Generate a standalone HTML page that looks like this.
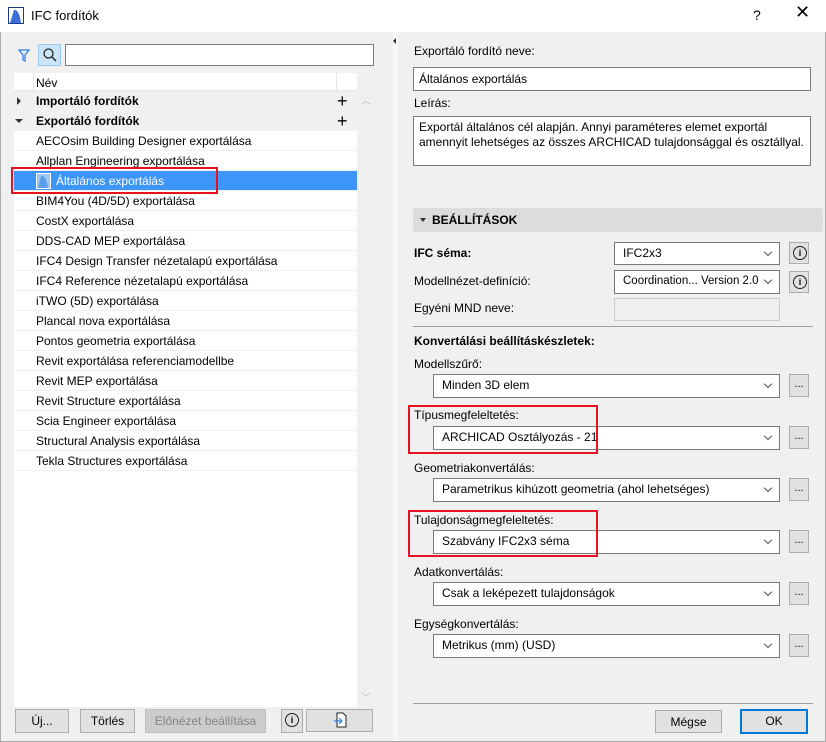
<!DOCTYPE html>
<html><head><meta charset="utf-8"><style>
*{box-sizing:border-box}
body{margin:0;width:826px;height:742px;overflow:hidden;background:#f0f0f0;font-family:"Liberation Sans",sans-serif;font-size:12px;color:#000;position:relative}
.a{position:absolute}
.t{position:absolute;white-space:nowrap;line-height:14px}
.b{font-weight:bold}
.box{position:absolute;background:#fff;border:1px solid #7a7a7a}
.combo{position:absolute;background:#fff;border:1px solid #7a7a7a;padding-left:8px;line-height:21px;white-space:nowrap}
.combo:after{content:"";position:absolute;right:8px;top:6px;width:5px;height:5px;border-right:1px solid #555;border-bottom:1px solid #555;transform:rotate(45deg)}
.dots{position:absolute;width:20px;height:23px;border:1px solid #adadad;background:#e1e1e1;text-align:center;line-height:18px;font-size:11px}
.btn{position:absolute;border:1px solid #adadad;background:#e1e1e1;text-align:center;line-height:22px}
.info{position:absolute;width:20px;height:22px;border:1px solid #adadad;background:#e1e1e1}
.info:after{content:"i";position:absolute;left:3px;top:3px;width:12px;height:12px;border:1px solid #222;border-radius:50%;font-size:9px;line-height:12px;text-align:center;font-weight:bold}
.row{position:absolute;left:14px;width:343px;height:20px;border-bottom:1px solid #f0f0f0;line-height:21px;padding-left:22px;white-space:nowrap}
.red{position:absolute;border:2px solid #e81123}
</style></head><body>
<div class="a" style="left:0;top:0;width:826px;height:32px;background:#fff"></div>
<svg class="a" style="left:8px;top:7px" width="16" height="17"><rect x="0.5" y="0.5" width="15" height="16" fill="#fff" stroke="#1a3a8a"/><path d="M2 16 L6 3 Q11 2 13 16 Z" fill="#3a6fd8"/></svg>
<div class="t" style="left:31px;top:9px;font-size:13px">IFC fordítók</div>
<div class="t" style="left:753px;top:8px;font-size:14px">?</div>
<div class="t" style="left:795px;top:5px;font-size:18px">✕</div>
<div class="a" style="left:0;top:32px;width:1px;height:710px;background:#aaa"></div>
<div class="a" style="left:825px;top:32px;width:1px;height:710px;background:#aaa"></div>

<svg class="a" style="left:18px;top:49px" width="12" height="13"><path d="M1 1 H11 L7 6 V12 L5 11 V6 Z" fill="none" stroke="#2a7de1" stroke-width="1.2"/></svg>
<div class="a" style="left:38px;top:44px;width:23px;height:22px;background:#cce4f7;border:1px solid #99c9ef"></div>
<svg class="a" style="left:42px;top:47px" width="16" height="16"><circle cx="6.5" cy="6.5" r="4.5" fill="none" stroke="#222" stroke-width="1.3"/><path d="M10 10 L14 14" stroke="#222" stroke-width="1.5"/></svg>
<div class="box" style="left:65px;top:44px;width:309px;height:22px"></div>
<div class="a" style="left:14px;top:73px;width:343px;height:634px;background:#fff"></div>
<div class="a" style="left:14px;top:73px;width:343px;height:18px;background:#fff;border-bottom:1px solid #e5e5e5"></div>
<div class="a" style="left:33px;top:73px;width:1px;height:18px;background:#e5e5e5"></div>
<div class="a" style="left:336px;top:73px;width:1px;height:18px;background:#e5e5e5"></div>
<div class="t" style="left:36px;top:76px">Név</div>
<div class="row b" style="top:91px;background:#f0f0f0">Importáló fordítók</div>
<div class="row b" style="top:111px;background:#f0f0f0">Exportáló fordítók</div>
<div class="a" style="left:17px;top:97px;width:0;height:0;border-left:4px solid #333;border-top:4px solid transparent;border-bottom:4px solid transparent"></div>
<div class="a" style="left:15px;top:119px;width:0;height:0;border-top:4px solid #333;border-left:4px solid transparent;border-right:4px solid transparent"></div>
<div class="t" style="left:337px;top:92px;font-size:18px;line-height:18px">+</div>
<div class="t" style="left:337px;top:112px;font-size:18px;line-height:18px">+</div>
<div class="row" style="top:131px">AECOsim Building Designer exportálása</div>
<div class="row" style="top:151px">Allplan Engineering exportálása</div>
<div class="row" style="top:171px;background:#3d95f7;color:#fff;padding-left:42px">Általános exportálás</div>
<svg class="a" style="left:36px;top:173px" width="15" height="16"><rect x="0.5" y="0.5" width="14" height="15" fill="#9cc8f7" stroke="#fff"/><path d="M2 15 L5 3 Q10 2 12 15 Z" fill="#5b9de8"/></svg>
<div class="row" style="top:191px">BIM4You (4D/5D) exportálása</div>
<div class="row" style="top:211px">CostX exportálása</div>
<div class="row" style="top:231px">DDS-CAD MEP exportálása</div>
<div class="row" style="top:251px">IFC4 Design Transfer nézetalapú exportálása</div>
<div class="row" style="top:271px">IFC4 Reference nézetalapú exportálása</div>
<div class="row" style="top:291px">iTWO (5D) exportálása</div>
<div class="row" style="top:311px">Plancal nova exportálása</div>
<div class="row" style="top:331px">Pontos geometria exportálása</div>
<div class="row" style="top:351px">Revit exportálása referenciamodellbe</div>
<div class="row" style="top:371px">Revit MEP exportálása</div>
<div class="row" style="top:391px">Revit Structure exportálása</div>
<div class="row" style="top:411px">Scia Engineer exportálása</div>
<div class="row" style="top:431px">Structural Analysis exportálása</div>
<div class="row" style="top:451px">Tekla Structures exportálása</div>
<div class="red" style="left:11px;top:167px;width:207px;height:27px"></div>
<div class="a" style="left:357px;top:91px;width:16px;height:616px;background:#f0f0f0"></div>
<div class="t" style="left:361px;top:95px;color:#bbb;font-size:10px">︿</div>
<div class="t" style="left:361px;top:692px;color:#bbb;font-size:10px">﹀</div>
<div class="btn" style="left:15px;top:709px;width:54px;height:24px">Új...</div>
<div class="btn" style="left:80px;top:709px;width:55px;height:24px">Törlés</div>
<div class="btn" style="left:145px;top:709px;width:121px;height:24px;background:#ccc;border-color:#bfbfbf;color:#838383">Előnézet beállítása</div>
<div class="info" style="left:281px;top:709px;width:22px;height:24px"></div>
<div class="btn" style="left:306px;top:709px;width:67px;height:23px"></div>
<svg class="a" style="left:334px;top:712px" width="14" height="17"><path d="M3 1 H9 L12 4 V15 H3 Z" fill="#fff" stroke="#222"/><path d="M0 9 H8 M5 6 L8 9 L5 12" fill="none" stroke="#2a7de1" stroke-width="1.2"/></svg>

<div class="a" style="left:393px;top:32px;width:5px;height:710px;background:#f7f7f7"></div>
<div class="a" style="left:393px;top:38px;width:0;height:0;border-right:3px solid #333;border-top:3px solid transparent;border-bottom:3px solid transparent"></div>

<div class="t" style="left:414px;top:44px">Exportáló fordító neve:</div>
<div class="box" style="left:413px;top:67px;width:398px;height:24px;padding-left:5px;line-height:22px">Általános exportálás</div>
<div class="t" style="left:414px;top:96px">Leírás:</div>
<div class="box" style="left:413px;top:116px;width:398px;height:50px;padding:3px 5px;line-height:15px">Exportál általános cél alapján. Annyi paraméteres elemet exportál<br>amennyit lehetséges az összes ARCHICAD tulajdonsággal és osztállyal.</div>
<div class="a" style="left:413px;top:208px;width:410px;height:24px;background:#dcdcdc;border-radius:3px"></div>
<div class="a" style="left:420px;top:218px;width:0;height:0;border-top:4px solid #333;border-left:3px solid transparent;border-right:3px solid transparent"></div>
<div class="t b" style="left:432px;top:213px">BEÁLLÍTÁSOK</div>
<div class="t b" style="left:414px;top:246px">IFC séma:</div>
<div class="combo" style="left:614px;top:242px;width:166px;height:23px">IFC2x3</div>
<div class="info" style="left:789px;top:242px"></div>
<div class="t" style="left:414px;top:274px">Modellnézet-definíció:</div>
<div class="combo" style="left:614px;top:270px;width:166px;height:24px;font-size:11.5px">Coordination... Version 2.0</div>
<div class="info" style="left:789px;top:271px"></div>
<div class="t" style="left:414px;top:301px">Egyéni MND neve:</div>
<div class="a" style="left:614px;top:298px;width:166px;height:23px;border:1px solid #ccc;background:#f0f0f0"></div>
<div class="a" style="left:413px;top:326px;width:400px;height:1px;background:#a0a0a0"></div>
<div class="t b" style="left:414px;top:334px">Konvertálási beállításkészletek:</div>

<div class="t" style="left:414px;top:357px">Modellszűrő:</div>
<div class="combo" style="left:433px;top:374px;width:347px;height:24px">Minden 3D elem</div>
<div class="dots" style="left:789px;top:374px">...</div>
<div class="t" style="left:414px;top:408px">Típusmegfeleltetés:</div>
<div class="combo" style="left:433px;top:426px;width:347px;height:24px">ARCHICAD Osztályozás - 21</div>
<div class="dots" style="left:789px;top:426px">...</div>
<div class="t" style="left:414px;top:461px">Geometriakonvertálás:</div>
<div class="combo" style="left:433px;top:478px;width:347px;height:24px">Parametrikus kihúzott geometria (ahol lehetséges)</div>
<div class="dots" style="left:789px;top:478px">...</div>
<div class="t" style="left:414px;top:513px">Tulajdonságmegfeleltetés:</div>
<div class="combo" style="left:433px;top:530px;width:347px;height:24px">Szabvány IFC2x3 séma</div>
<div class="dots" style="left:789px;top:530px">...</div>
<div class="t" style="left:414px;top:565px">Adatkonvertálás:</div>
<div class="combo" style="left:433px;top:582px;width:347px;height:24px">Csak a leképezett tulajdonságok</div>
<div class="dots" style="left:789px;top:582px">...</div>
<div class="t" style="left:414px;top:617px">Egységkonvertálás:</div>
<div class="combo" style="left:433px;top:634px;width:347px;height:24px">Metrikus (mm) (USD)</div>
<div class="dots" style="left:789px;top:634px">...</div>
<div class="red" style="left:408px;top:405px;width:190px;height:49px"></div>
<div class="red" style="left:408px;top:510px;width:190px;height:47px"></div>

<div class="a" style="left:413px;top:703px;width:400px;height:1px;background:#a0a0a0"></div>
<div class="btn" style="left:655px;top:710px;width:67px;height:23px">Mégse</div>
<div class="btn" style="left:740px;top:709px;width:68px;height:25px;border:2px solid #0078d7;line-height:21px">OK</div>
<div class="a" style="left:0;top:741px;width:826px;height:1px;background:#aaa"></div>
</body></html>
